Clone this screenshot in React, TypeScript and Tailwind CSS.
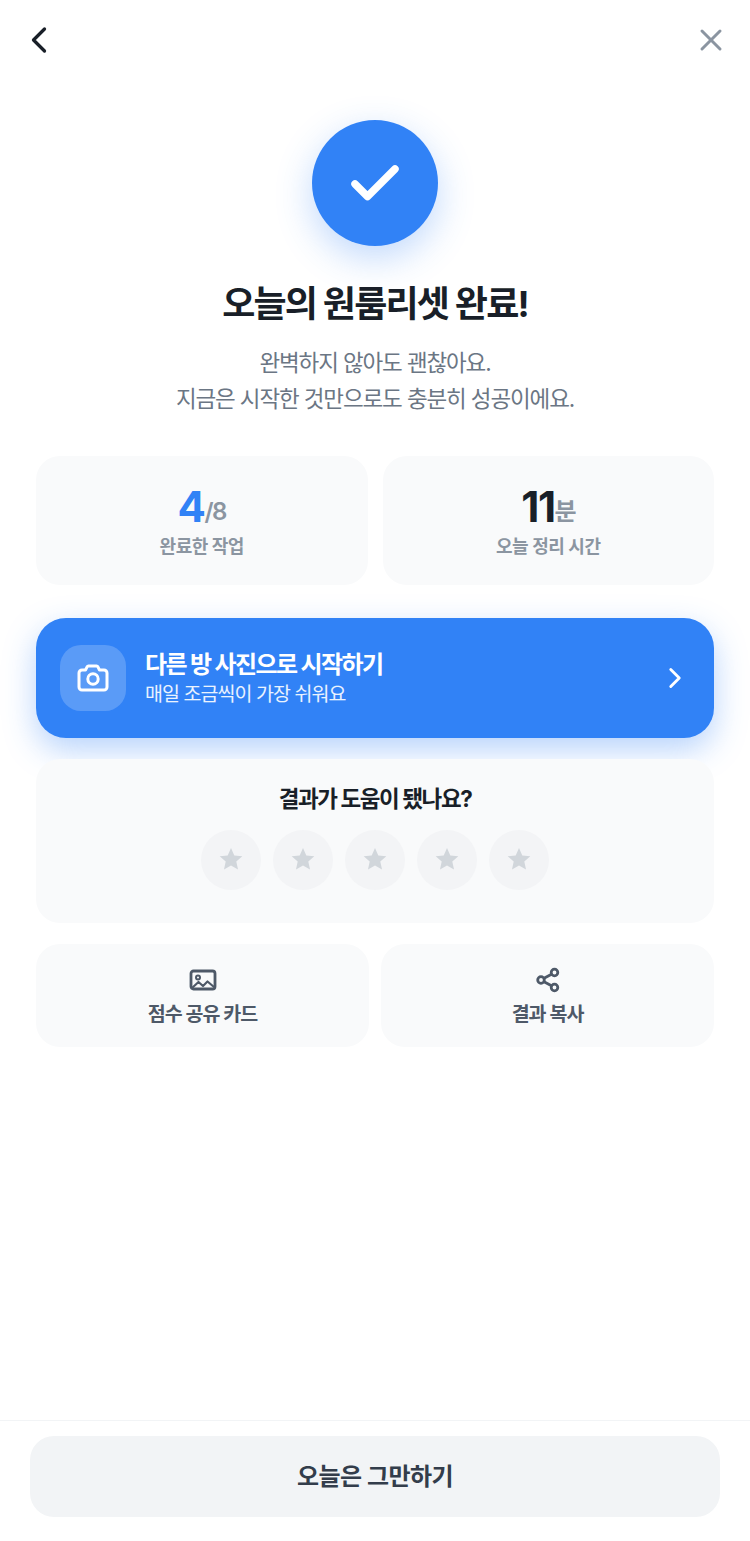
import { Check, ChevronLeft, ChevronRight, X } from "lucide-react";

const font = "font-['Inter','Noto_Sans_CJK_KR',sans-serif]";

function StatCard({ value, unit, label, valueColor }: { value: string; unit: string; label: string; valueColor: string }) {
  return (
    <div className="flex h-[129px] flex-1 flex-col items-center rounded-[24px] bg-[#f9fafb] pt-[29px]">
      <div className="flex h-[44px] items-end justify-center">
        <span className={`text-[42px] leading-[44px] font-bold tracking-[-1.500px] ${valueColor}`}>{value}</span>
        <span className="text-[24px] leading-[34px] font-semibold tracking-[-1.500px] text-[#8b95a1]">{unit}</span>
      </div>
      <div className="mt-[4px] text-[18px] leading-[27px] font-semibold tracking-[-0.5px] text-[#8b95a1]">{label}</div>
    </div>
  );
}

function ActionCard({ icon, label }: { icon: React.ReactNode; label: string }) {
  return (
    <button className="flex h-[103px] flex-1 flex-col items-center rounded-[24px] bg-[#f9fafb] pt-[22px]">
      <span className="flex h-[28px] items-center justify-center">{icon}</span>
      <span className="mt-[5px] text-[19.5px] leading-[30px] font-semibold tracking-[-1px] text-[#4e5968]">{label}</span>
    </button>
  );
}

function CameraIcon() {
  return (
    <svg width="32" height="30" viewBox="0 0 32 30" fill="none" stroke="white" strokeWidth="3" strokeLinejoin="round">
      <path d="M5 7h3.500l1.600-3.200c.3-.5.7-.8 1.300-.8h8.200c.6 0 1 .3 1.300.8L22.500 7H27c1.700 0 3 1.300 3 3v14c0 1.700-1.300 3-3 3H5c-1.700 0-3-1.300-3-3V10c0-1.700 1.300-3 3-3z" />
      <circle cx="16" cy="16" r="5.200" />
    </svg>
  );
}

function PictureIcon() {
  return (
    <svg width="28" height="24" viewBox="0 0 28 24" fill="none" stroke="#4e5968" strokeWidth="2.800" strokeLinejoin="round">
      <rect x="2" y="3" width="24" height="18" rx="2.500" />
      <circle cx="9" cy="9.500" r="2" strokeWidth="2" />
      <path d="M3 20l6.500-6 4.500 4 4.500-4.500L25 19" strokeWidth="2.200" />
    </svg>
  );
}

function ShareIcon() {
  return (
    <svg width="26" height="26" viewBox="0 0 26 26" fill="none" stroke="#4e5968" strokeWidth="2.800">
      <circle cx="19.500" cy="5.500" r="3.300" />
      <circle cx="6" cy="13" r="3.300" />
      <circle cx="19.500" cy="20.500" r="3.300" />
      <path d="M9 11.300l7.500-4.100M9 14.700l7.500 4.100" />
    </svg>
  );
}

function StarIcon() {
  return (
    <svg width="24" height="24" viewBox="0 0 24 24" fill="#d1d6db" className="-mt-[2px]">
      <path d="M12 1l3.300 7.400 8 .8-6 5.300 1.700 7.900-7-4-7 4 1.700-7.900-6-5.300 8-.8z" />
    </svg>
  );
}

export default function App() {
  return (
    <div className={`${font} flex min-h-[1541px] w-full flex-col bg-white`}>
      <div className="flex h-[80px] items-center justify-between px-[17px]">
        <ChevronLeft size={44} strokeWidth={1.8} className="text-[#191f28]" />
        <X size={36} strokeWidth={2} className="mr-[4px] text-[#8b95a1]" />
      </div>

      <main className="flex flex-1 flex-col px-[36px]">
        <div className="mt-[40px] flex flex-col items-center">
          <div className="flex h-[126px] w-[126px] items-center justify-center rounded-full bg-[#3182f6] shadow-[0_12px_36px_rgba(49,130,246,0.3)]">
            <Check size={60} strokeWidth={3} className="mt-[2px] text-white" />
          </div>
          <h1 className="mt-[33px] text-[36px] leading-[51px] font-bold tracking-[-1.8px] text-[#191f28]">오늘의 원룸리셋 완료!</h1>
          <p className="mt-[15px] text-center text-[22.5px] leading-[36px] tracking-[-1.12px] text-[#6b7684]">
            완벽하지 않아도 괜찮아요.
            <br />
            지금은 시작한 것만으로도 충분히 성공이에요.
          </p>
        </div>

        <div className="mt-[39px] flex gap-[15px]">
          <StatCard value="4" unit="/8" label="완료한 작업" valueColor="text-[#3182f6]" />
          <StatCard value="11" unit="분" label="오늘 정리 시간" valueColor="text-[#191f28]" />
        </div>

        <button className="mt-[33px] flex h-[120px] items-center rounded-[30px] bg-[#3182f6] px-[24px] text-left shadow-[0_12px_32px_rgba(49,130,246,0.35)]">
          <div className="flex h-[66px] w-[66px] items-center justify-center rounded-[21px] bg-white/20">
            <CameraIcon />
          </div>
          <div className="ml-[19px] flex-1 pt-[2px]">
            <div className="text-[24px] leading-[30px] font-bold tracking-[-1.6px] text-white">다른 방 사진으로 시작하기</div>
            <div className="mt-[1px] text-[19.5px] leading-[27px] tracking-[-0.95px] text-white/90">매일 조금씩이 가장 쉬워요</div>
          </div>
          <ChevronRight size={34} strokeWidth={2} className="-mr-[2px] text-white" />
        </button>

        <div className="relative mt-[21px] flex h-[164px] flex-col items-center rounded-[24px] bg-[#f9fafb] pt-[25px]">
          <div className="text-[22.5px] leading-[30px] font-bold tracking-[-1.4px] text-[#191f28]">결과가 도움이 됐나요?</div>
          <div className="mt-[16px] flex gap-[12px]">
            {[0, 1, 2, 3, 4].map((i) => (
              <div key={i} className="flex h-[60px] w-[60px] items-center justify-center rounded-full bg-[#f3f4f6]">
                <StarIcon />
              </div>
            ))}
          </div>
        </div>

        <div className="mt-[21px] flex gap-[12px]">
          <ActionCard icon={<PictureIcon />} label="점수 공유 카드" />
          <ActionCard icon={<ShareIcon />} label="결과 복사" />
        </div>
      </main>

      <footer className="border-t border-[#f2f4f6] px-[30px] pt-[15px] pb-[24px]">
        <button className="flex h-[81px] w-full items-center justify-center rounded-[24px] bg-[#f2f4f6] text-[24px] font-semibold tracking-[-0.6px] text-[#333d4b]">
          오늘은 그만하기
        </button>
      </footer>
    </div>
  );
}
